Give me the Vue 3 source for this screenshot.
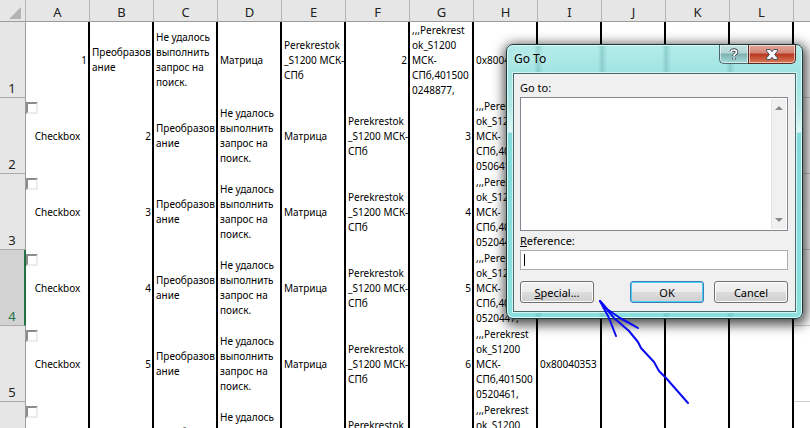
<script setup>
import { ref } from 'vue'

const columns = ['A', 'B', 'C', 'D', 'E', 'F', 'G', 'H', 'I', 'J', 'K', 'L']
const selectedRow = 4
const reference = ref('')

const word = 'Преобразов\nание'
const failure = 'Не удалось\nвыполнить\nзапрос на\nпоиск.'
const matrix = 'Матрица'
const store = 'Perekrestok\n_S1200 МСК-\nСПб'
const order = (code) => ',,,Perekrest\nok_S1200\nМСК-\nСПб,401500\n' + code + ','

const shifted = (n, code, error) => ['Checkbox', n, word, failure, matrix, store, n + 1, order(code), error, '', '', '']

const rows = [
  [1, word, failure, matrix, store, 2, order('0248877'), '0x80040353', '', '', '', ''],
  shifted(2, '0506411', '0x80040353'),
  shifted(3, '0520443', '0x80040353'),
  shifted(4, '0520447', ''),
  shifted(5, '0520461', '0x80040353'),
  shifted(6, '0520462', '')
]
</script>

<template>
  <main class="workbook">
    <table class="sheet">
      <colgroup>
        <col class="col-index" />
        <col v-for="c in columns" :key="c" class="col-data" />
        <col />
      </colgroup>
      <thead>
        <tr>
          <th class="corner">
            <svg width="13" height="12" viewBox="0 0 13 12"><path d="M12 0V12H0Z" fill="#b4b4b4" /></svg>
          </th>
          <th v-for="c in columns" :key="c" scope="col">{{ c }}</th>
          <th class="rest"></th>
        </tr>
      </thead>
      <tbody>
        <tr v-for="(row, r) in rows" :key="r">
          <th scope="row" :class="{ selected: r + 1 === selectedRow }">{{ r + 1 }}</th>
          <td v-for="(cell, c) in row" :key="c" :class="{ number: typeof cell === 'number' }">
            <template v-if="cell === 'Checkbox'">
              <input :id="'check-' + r" class="tick" type="checkbox" />
              <label class="tick-label" :for="'check-' + r">{{ cell }}</label>
            </template>
            <div v-else class="value">{{ cell }}</div>
          </td>
          <td class="rest"></td>
        </tr>
      </tbody>
    </table>

    <section class="window" role="dialog" aria-labelledby="window-title">
      <header class="titlebar">
        <h1 id="window-title">Go To</h1>
        <div class="caption">
          <button type="button" class="help" aria-label="Help">
            <svg width="10" height="13" viewBox="0 0 10 13" fill="none">
              <path d="M2.5 4V3.7Q2.5 2 5 2T7.5 4Q7.5 5.3 6.2 6Q5 6.6 5 8M5 9.8V11.5" stroke="#46525c" stroke-width="3.6" />
              <path d="M2 4V3.7Q2.5 2 5 2T7.5 4Q7.5 5.3 6.2 6Q5 6.6 5 8M5 9.8V11.2" stroke="#fff" stroke-width="1.7" />
            </svg>
          </button>
          <button type="button" class="close" aria-label="Close">
            <svg width="12" height="11" viewBox="0 0 12 11">
              <path d="M.5 .5H4.3L6 2.7L7.7 .5H11.5V2L8.7 5.5L11.5 9V10.5H7.7L6 8.3L4.3 10.5H.5V9L3.3 5.5L.5 2Z" fill="#f6f6f8" stroke="#49505f" />
            </svg>
          </button>
        </div>
      </header>
      <form class="panel" @submit.prevent>
        <label for="places">Go to:</label>
        <div class="list">
          <select id="places" size="8"></select>
          <div class="scroll">
            <svg width="8" height="4" viewBox="0 0 8 4"><path d="M4 0L8 4H0Z" fill="#868686" /></svg>
            <svg width="8" height="4" viewBox="0 0 8 4"><path d="M0 0H8L4 4Z" fill="#868686" /></svg>
          </div>
        </div>
        <label for="reference"><u>R</u>eference:</label>
        <div class="field">
          <input id="reference" v-model="reference" type="text" />
          <span class="caret"></span>
        </div>
        <div class="actions">
          <button type="button" class="special"><u>S</u>pecial...</button>
          <button type="submit" class="primary">OK</button>
          <button type="button">Cancel</button>
        </div>
      </form>
    </section>

    <svg class="arrow" width="92" height="106" viewBox="0 0 92 106" fill="none" stroke="#0a0af5" stroke-width="2" stroke-linecap="round" stroke-linejoin="round">
      <path d="M2 2L16 19L31 32L40 43L43 49L56 63L61 72L68 79L90 104" />
      <path d="M18 37L11 19L2 2L9 10L22 19L33 25L40 29" />
    </svg>
  </main>
</template>

<style>
body {
  background: #fff;
}
</style>

<style scoped>
.workbook {
  position: relative;
  height: 100vh;
  overflow: hidden;
  font-family: "Noto Sans", "Open Sans", sans-serif;
  color: #000;
}
.sheet {
  width: 100%;
  table-layout: fixed;
  border-collapse: separate;
  border-spacing: 0;
}
.col-index {
  width: 26px;
}
.col-data {
  width: 64px;
}
th {
  box-sizing: border-box;
  padding: 0;
  background: #e6e6e6;
  font-size: 13px;
  font-weight: 400;
  color: #222;
}
thead th {
  height: 22px;
  padding-top: 2px;
  line-height: 18px;
  border-bottom: 1px solid #9b9b9b;
  border-right: 1px solid #b4b4b4;
}
thead th.rest {
  border-right: 0;
}
.corner {
  text-align: right;
}
.corner svg {
  display: block;
  margin: 2px 3px 0 auto;
}
tbody th {
  height: 76px;
  padding-right: 1px;
  vertical-align: bottom;
  line-height: 18px;
  border-right: 1px solid #9b9b9b;
  border-bottom: 1px solid #ababab;
}
tbody th.selected {
  padding-right: 0;
  background: #d2d2d2;
  color: #217346;
  border-right: 2px solid #217346;
}
td {
  position: relative;
  box-sizing: border-box;
  height: 76px;
  padding: 0 1px 0 2px;
  border-right: 2px solid #000;
  vertical-align: middle;
  font-size: 10px;
  line-height: 15px;
}
td.rest {
  border-right: 0;
  border-bottom: 1px solid #d0d0d0;
}
.number {
  text-align: right;
}
.value {
  white-space: pre;
}
.tick {
  appearance: none;
  position: absolute;
  top: 4px;
  left: 0;
  box-sizing: border-box;
  width: 12px;
  height: 12px;
  margin: 0;
  border: 2px solid;
  border-color: #8c8c8c #ececec #ececec #8c8c8c;
  background: #fff;
}
.tick-label {
  display: block;
  text-align: center;
}
.window {
  position: absolute;
  top: 44px;
  left: 506px;
  box-sizing: border-box;
  width: 297px;
  padding: 0 6px 6px;
  border: 1px solid #1d3a3a;
  border-radius: 7px;
  background:
    linear-gradient(90deg, transparent 27px, #5da8a866 31px, transparent 36px, transparent 91px, #5da8a866 95px, transparent 100px, transparent 155px, #5da8a866 159px, transparent 164px, transparent 219px, #5da8a866 223px, transparent 228px),
    linear-gradient(180deg, #b4ecea 0, #a0e4e2 28px, #b0e8e6 60px, #e0f6f5 87px, #83dcda 88px, #8be0de 100%);
  box-shadow: inset 0 0 0 1px #d9fbfa, 1px 3px 12px 3px #000000b0;
}
.titlebar {
  display: flex;
  justify-content: space-between;
  height: 28px;
}
h1 {
  margin: 0 0 0 1px;
  font-size: 12px;
  font-weight: 400;
  line-height: 28px;
  text-shadow: 0 0 8px #fff;
}
.caption {
  display: flex;
  height: 19px;
}
.caption button {
  display: flex;
  align-items: center;
  justify-content: center;
  padding: 0;
  border: 1px solid #4b6668;
  border-top: 0;
  box-shadow: inset 0 0 0 1px #ffffff90;
}
.caption .help {
  width: 29px;
  border-right: 0;
  border-radius: 0 0 0 5px;
  background: linear-gradient(#c3e2e1 0, #b4d5d5 45%, #7fb0b1 50%, #a5dcdc 100%);
}
.caption .close {
  width: 48px;
  border-color: #5c2821;
  border-radius: 0 0 5px 0;
  background: linear-gradient(#e4a797 0, #d08474 45%, #b8361f 50%, #d77a55 100%);
}
.panel {
  display: flex;
  flex-direction: column;
  padding: 5px 7px 8px 6px;
  border: 1px solid #47696a;
  background: #f0f0f0;
  box-shadow: 0 0 0 1px #d2f6f5;
  font-size: 11px;
}
.panel label {
  line-height: 17px;
}
.list {
  display: flex;
  height: 132px;
  margin: 1px 0;
  border: 1px solid #828790;
  background: #fff;
}
.list select {
  appearance: none;
  flex: 1;
  min-width: 0;
  margin: 0;
  padding: 0;
  border: 0;
  background: #fff;
}
.scroll {
  display: flex;
  flex-direction: column;
  align-items: center;
  justify-content: space-between;
  width: 15px;
  margin: 1px;
  padding: 7px 0;
  box-sizing: border-box;
  border-left: 1px solid #e3e3e3;
  background: #f0f0f0;
}
.field {
  position: relative;
  display: flex;
  margin: 1px 0 11px;
}
.field input {
  box-sizing: border-box;
  width: 100%;
  height: 20px;
  padding: 0 4px;
  border: 1px solid #abadb3;
  background: #fff;
  font: inherit;
}
.caret {
  position: absolute;
  top: 4px;
  left: 4px;
  width: 1px;
  height: 12px;
  background: #000;
}
.actions {
  display: flex;
  gap: 10px;
}
.actions button {
  width: 74px;
  height: 22px;
  padding: 0;
  border: 1px solid #707070;
  border-radius: 3px;
  background: linear-gradient(#f2f2f2 0, #ebebeb 50%, #dddddd 50%, #cfcfcf 100%);
  box-shadow: inset 0 0 0 1px #fcfcfc;
  font: inherit;
  color: #000;
}
.actions .special {
  margin-right: auto;
}
.actions .primary {
  border-color: #3c7fb1;
  box-shadow: inset 0 0 0 1px #48d0f8;
}
.arrow {
  position: absolute;
  top: 299px;
  left: 598px;
  pointer-events: none;
}
</style>
